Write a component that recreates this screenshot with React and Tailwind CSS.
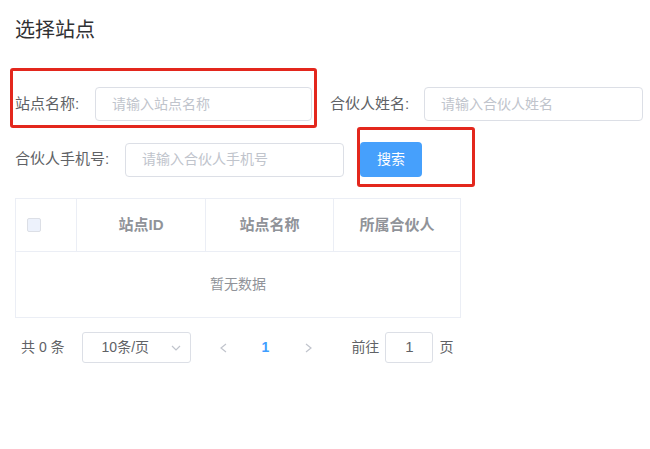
import React from 'react'

const FONT = "font-['Liberation_Sans','Noto_Sans_CJK_SC',sans-serif]"

function Field({ label, labelW, inputW, placeholder }) {
  return (
    <div className="flex items-center">
      <label className={`text-[15px] text-[#606266] ${labelW}`}>{label}</label>
      <div className={`h-[34px] ${inputW} rounded-[4px] border border-[#dcdfe6] bg-white flex items-center px-[16px]`}>
        <span className="text-[14px] text-[#c0c4cc]">{placeholder}</span>
      </div>
    </div>
  )
}

function Chevron({ dir }) {
  const pts = dir === 'left' ? '6,1 1,5 6,9' : dir === 'right' ? '1,1 6,5 1,9' : '1,1 5,5 9,1'
  const w = dir === 'down' ? 10 : 7
  const h = dir === 'down' ? 6 : 10
  return (
    <svg width={w} height={h} viewBox={`0 0 ${w} ${h}`} fill="none" stroke="#c0c4cc" strokeWidth="1.2">
      <polyline points={pts} />
    </svg>
  )
}

export default function App() {
  return (
    <div className={`relative w-full h-[449px] bg-white px-[15px] pt-[16px] ${FONT}`}>
      {/* Title */}
      <div className="text-[20px] leading-[28px] text-[#303133]">选择站点</div>

      {/* Search form */}
      <div className="mt-[43px] flex items-center">
        <Field label="站点名称:" labelW="w-[80px]" inputW="w-[217px]" placeholder="请输入站点名称" />
        <div className="ml-[18px]">
          <Field label="合伙人姓名:" labelW="w-[94px]" inputW="w-[219px]" placeholder="请输入合伙人姓名" />
        </div>
      </div>
      <div className="mt-[21px] flex items-center">
        <Field label="合伙人手机号:" labelW="w-[110px]" inputW="w-[219px]" placeholder="请输入合伙人手机号" />
        <button className="ml-[16px] w-[62px] h-[35px] rounded-[4px] bg-[#46a0fc] text-white text-[14px]">搜索</button>
      </div>

      {/* Table */}
      <div className="mt-[21px] w-[446px] border border-[#ebeef5]">
        <div className="grid grid-cols-[61px_129px_128px_1fr] h-[53px] border-b border-[#ebeef5] text-[15px] font-bold text-[#909399]">
          <div className="flex items-center pl-[11px] border-r border-[#ebeef5]">
            <span className="w-[14px] h-[14px] rounded-[2px] border border-[#dcdfe6] bg-[#edf2fc]" />
          </div>
          <div className="flex items-center justify-center border-r border-[#ebeef5]">站点ID</div>
          <div className="flex items-center justify-center border-r border-[#ebeef5]">站点名称</div>
          <div className="flex items-center justify-center">所属合伙人</div>
        </div>
        <div className="h-[65px] flex items-center justify-center text-[14px] text-[#909399]">暂无数据</div>
      </div>

      {/* Pagination */}
      <div className="mt-[14px] flex items-center h-[31px] text-[14px] text-[#606266]">
        <span className="ml-[6px]">共 0 条</span>
        <div className="ml-[17px] w-[109px] h-[31px] rounded-[3px] border border-[#dcdfe6] flex items-center justify-between pl-[19px] pr-[9px]">
          <span>10条/页</span>
          <Chevron dir="down" />
        </div>
        <div className="ml-[29px] w-[8px] flex justify-center"><Chevron dir="left" /></div>
        <span className="ml-[34px] text-[#409eff] font-bold">1</span>
        <div className="ml-[35px] w-[8px] flex justify-center"><Chevron dir="right" /></div>
        <span className="ml-[39px]">前往</span>
        <div className="ml-[6px] w-[48px] h-[31px] rounded-[3px] border border-[#dcdfe6] flex items-center justify-center text-[15px]">1</div>
        <span className="ml-[6px]">页</span>
      </div>

      {/* Annotation boxes */}
      <div className="absolute left-[10px] top-[68px] w-[307px] h-[60px] border-[3px] border-[#e3271d] rounded-[3px]" />
      <div className="absolute left-[357px] top-[127px] w-[118px] h-[60px] border-[3px] border-[#e3271d] rounded-[3px]" />
    </div>
  )
}
